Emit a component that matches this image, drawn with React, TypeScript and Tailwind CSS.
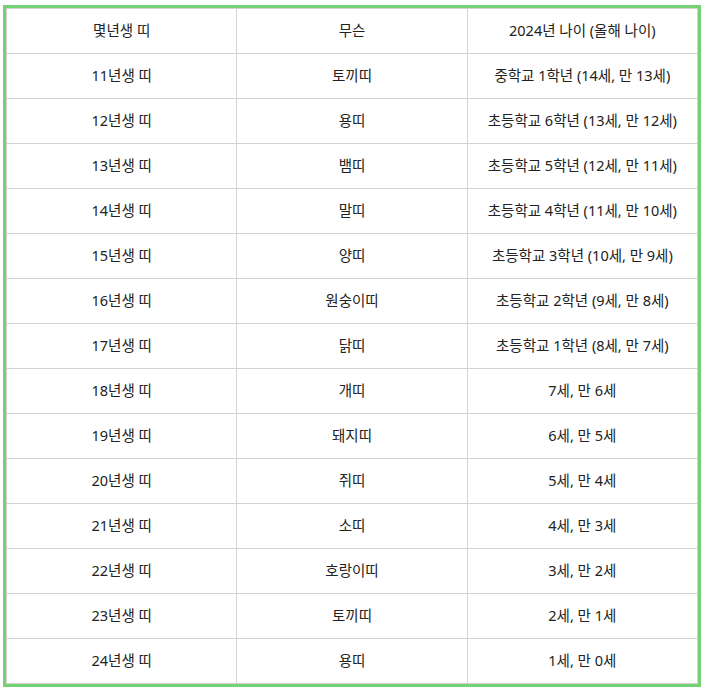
const rows: [string, string, string][] = [
  ["11년생 띠", "토끼띠", "중학교 1학년 (14세, 만 13세)"],
  ["12년생 띠", "용띠", "초등학교 6학년 (13세, 만 12세)"],
  ["13년생 띠", "뱀띠", "초등학교 5학년 (12세, 만 11세)"],
  ["14년생 띠", "말띠", "초등학교 4학년 (11세, 만 10세)"],
  ["15년생 띠", "양띠", "초등학교 3학년 (10세, 만 9세)"],
  ["16년생 띠", "원숭이띠", "초등학교 2학년 (9세, 만 8세)"],
  ["17년생 띠", "닭띠", "초등학교 1학년 (8세, 만 7세)"],
  ["18년생 띠", "개띠", "7세, 만 6세"],
  ["19년생 띠", "돼지띠", "6세, 만 5세"],
  ["20년생 띠", "쥐띠", "5세, 만 4세"],
  ["21년생 띠", "소띠", "4세, 만 3세"],
  ["22년생 띠", "호랑이띠", "3세, 만 2세"],
  ["23년생 띠", "토끼띠", "2세, 만 1세"],
  ["24년생 띠", "용띠", "1세, 만 0세"],
];

const cell = "h-[45px] border border-[#d3d3d3] text-center align-middle p-0 pb-px";

export default function App() {
  return (
    <div
      className="min-h-screen bg-white pl-[3px] pt-[5px] text-[14.5px] text-[#222]"
      style={{ fontFamily: '"Noto Sans", "Noto Sans CJK KR", sans-serif' }}
    >
      <div className="w-[698px] border-[3px] border-[#74d274]">
        <table className="w-full table-fixed border-collapse">
          <thead>
            <tr>
              <th className={`${cell} font-normal`}>몇년생 띠</th>
              <th className={`${cell} font-normal`}>무슨</th>
              <th className={`${cell} font-normal`}>2024년 나이 (올해 나이)</th>
            </tr>
          </thead>
          <tbody>
            {rows.map((r) => (
              <tr key={r[0]}>
                <td className={cell}>{r[0]}</td>
                <td className={cell}>{r[1]}</td>
                <td className={cell}>{r[2]}</td>
              </tr>
            ))}
          </tbody>
        </table>
      </div>
    </div>
  );
}
